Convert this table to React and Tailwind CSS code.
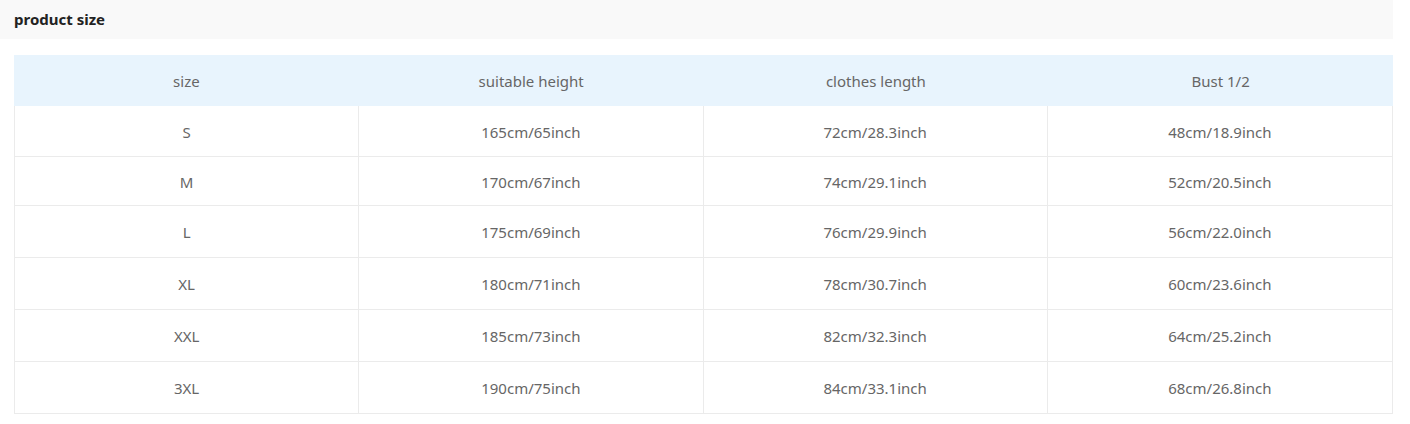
const headers = ["size", "suitable height", "clothes length", "Bust 1/2"];

const rows = [
  ["S", "165cm/65inch", "72cm/28.3inch", "48cm/18.9inch", "h-[51px]"],
  ["M", "170cm/67inch", "74cm/29.1inch", "52cm/20.5inch", "h-[49px]"],
  ["L", "175cm/69inch", "76cm/29.9inch", "56cm/22.0inch", "h-[52px]"],
  ["XL", "180cm/71inch", "78cm/30.7inch", "60cm/23.6inch", "h-[52px]"],
  ["XXL", "185cm/73inch", "82cm/32.3inch", "64cm/25.2inch", "h-[52px]"],
  ["3XL", "190cm/75inch", "84cm/33.1inch", "68cm/26.8inch", "h-[52px]"],
];

export default function App() {
  return (
    <div
      className="w-[1410px] h-[424px] bg-white text-[#666]"
      style={{ fontFamily: '"Noto Sans", "Open Sans", sans-serif' }}
    >
      {/* Section title */}
      <div className="w-[1393px] h-[39px] bg-[#f9f9f9] flex items-center pl-[14px]">
        <span className="text-[15px] font-bold text-[#222]">product size</span>
      </div>

      {/* Size table */}
      <div className="mt-[16px] ml-[14px] w-[1379px]">
        <div className="grid grid-cols-4 h-[51px] bg-[#e8f4fd]">
          {headers.map((h) => (
            <div key={h} className="flex items-center justify-center text-[15px] pt-[2px]">
              {h}
            </div>
          ))}
        </div>
        <div className="border-l border-r border-[#ebebeb]">
          {rows.map((r) => (
            <div key={r[0]} className={`grid grid-cols-4 border-b border-[#ebebeb] ${r[4]}`}>
              {r.slice(0, 4).map((c, i) => (
                <div
                  key={i}
                  className={`flex items-center justify-center text-[15px] pt-[2px] ${
                    i < 3 ? "border-r border-[#ebebeb]" : ""
                  }`}
                >
                  {c}
                </div>
              ))}
            </div>
          ))}
        </div>
      </div>
    </div>
  );
}
